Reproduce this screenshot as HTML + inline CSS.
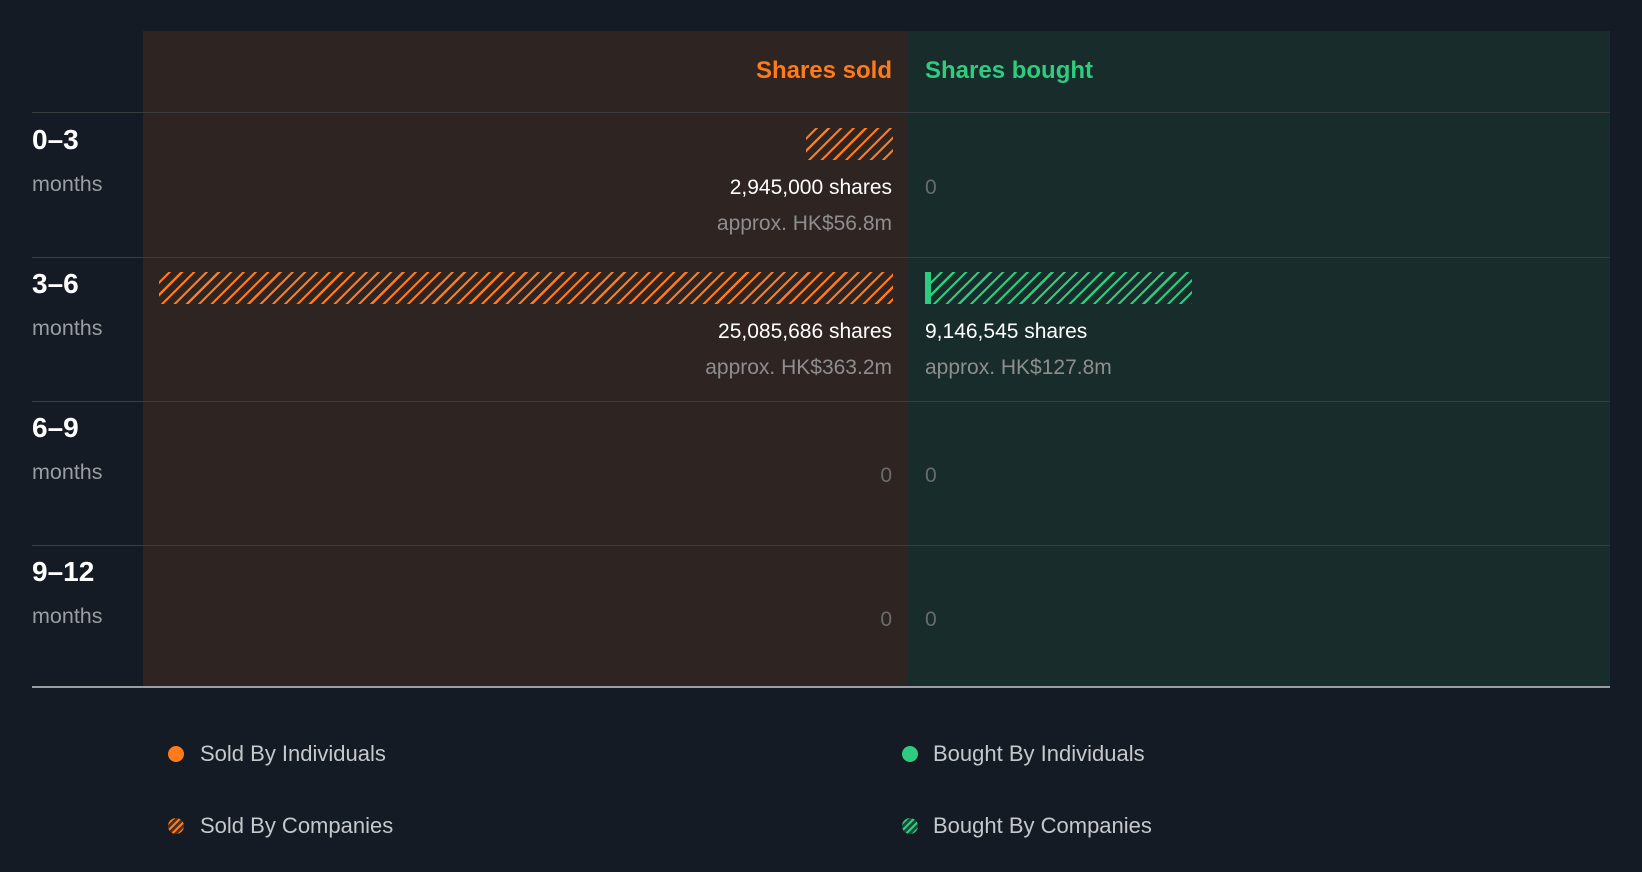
<!DOCTYPE html>
<html><head><style>
*{margin:0;padding:0;box-sizing:border-box}
body{width:1642px;height:872px;background:#151b24;font-family:"Liberation Sans",Arial,sans-serif;position:relative;overflow:hidden}
.a{position:absolute}
.hl{position:absolute;left:32px;width:1578px;height:1px;background:#3a3d40}
.lab{position:absolute;left:32px;color:#fff;font-weight:bold;font-size:28px}
.mo{position:absolute;left:32px;color:#9a9da1;font-size:21.5px}
.r{position:absolute;right:750px;text-align:right;white-space:nowrap}
.l{position:absolute;left:925px;white-space:nowrap}
.w{color:#fff;font-size:21px}
.g{color:#8e8e8e;font-size:21px}
.z{color:#666d6c;font-size:21px}
.ob{position:absolute;background:repeating-linear-gradient(135deg,transparent 0 6.5px,#ff7a1a 6.5px 8.7px)}
.gb{position:absolute;background:repeating-linear-gradient(135deg,transparent 0 6.5px,#2ecc7f 6.5px 8.7px)}
.leg{position:absolute;color:#c5c8cc;font-size:22px}
.dot{position:absolute;width:16px;height:16px;border-radius:50%}
</style></head><body>
<div class="a" style="left:143px;top:31px;width:765px;height:656px;background:#2e2422"></div>
<div class="a" style="left:908px;top:31px;width:702px;height:656px;background:#172c2b"></div>
<div class="hl" style="top:112px"></div>
<div class="hl" style="top:257px"></div>
<div class="hl" style="top:401px"></div>
<div class="hl" style="top:545px"></div>
<div class="a" style="left:32px;top:686px;width:1578px;height:2px;background:#9a9ea3"></div>
<div class="r" style="top:57px;color:#ff7a1a;font-weight:bold;font-size:24px">Shares sold</div>
<div class="a" style="left:925px;top:57px;color:#2ecc7f;font-weight:bold;font-size:24px">Shares bought</div>

<div class="lab" style="top:124px">0–3</div><div class="mo" style="top:172px">months</div>
<div class="lab" style="top:268px">3–6</div><div class="mo" style="top:316px">months</div>
<div class="lab" style="top:412px">6–9</div><div class="mo" style="top:460px">months</div>
<div class="lab" style="top:556px">9–12</div><div class="mo" style="top:604px">months</div>

<div class="ob" style="left:806px;top:128px;width:87px;height:32px"></div>
<div class="r w" style="top:176px">2,945,000 shares</div>
<div class="r g" style="top:212px">approx. HK$56.8m</div>
<div class="l z" style="top:176px">0</div>

<div class="ob" style="left:159px;top:272px;width:734px;height:32px"></div>
<div class="r w" style="top:320px">25,085,686 shares</div>
<div class="r g" style="top:356px">approx. HK$363.2m</div>
<div class="a" style="left:925px;top:272px;width:6px;height:32px;background:#2ecc7f"></div>
<div class="gb" style="left:931px;top:272px;width:261px;height:32px"></div>
<div class="l w" style="top:320px">9,146,545 shares</div>
<div class="l g" style="top:356px">approx. HK$127.8m</div>

<div class="r z" style="top:464px">0</div><div class="l z" style="top:464px">0</div>
<div class="r z" style="top:608px">0</div><div class="l z" style="top:608px">0</div>

<div class="dot" style="left:168px;top:746px;background:#ff7a1a"></div>
<div class="leg" style="left:200px;top:741px">Sold By Individuals</div>
<div class="dot" style="left:168px;top:818px;background:repeating-linear-gradient(135deg,#4a3020 0 3px,#ff7a1a 3px 5px)"></div>
<div class="leg" style="left:200px;top:813px">Sold By Companies</div>
<div class="dot" style="left:902px;top:746px;background:#2ecc7f"></div>
<div class="leg" style="left:933px;top:741px">Bought By Individuals</div>
<div class="dot" style="left:902px;top:818px;background:repeating-linear-gradient(135deg,#1d4a38 0 3px,#2ecc7f 3px 5px)"></div>
<div class="leg" style="left:933px;top:813px">Bought By Companies</div>
</body></html>
